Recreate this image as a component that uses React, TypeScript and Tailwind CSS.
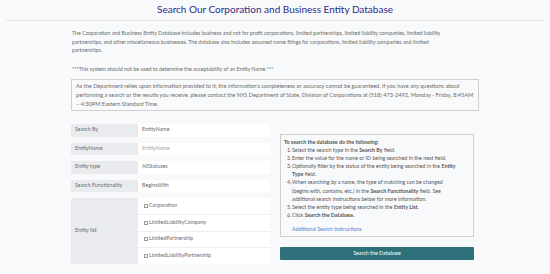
import React from "react";

const fields = [
  { label: "Search By", value: "EntityName", muted: false },
  { label: "EntityName", value: "EntityName", muted: true },
  { label: "Entity type", value: "AllStatuses", muted: false },
  { label: "Search Functionality", value: "BeginsWith", muted: false },
];

const entityTypes = [
  "Corporation",
  "LimitedLiabilityCompany",
  "LimitedPartnership",
  "LimitedLiabilityPartnership",
];

export default function App() {
  return (
    <div className="min-h-[274px] bg-[#f8f9fa] font-['Lato','Liberation_Sans',sans-serif] text-[#6b6b6b]">
      {/* Header */}
      <h1 className="pt-[3px] text-center text-[10px] leading-[13px] text-[#2b2a86]">
        Search Our Corporation and Business Entity Database
      </h1>
      <div className="mx-[6px] mt-[4px] border-t border-[#e3e4e8]" />

      <div className="ml-[71px] w-[408px]">
        {/* Intro */}
        <div className="w-[372px] pl-[1px] pt-[8px] text-[5.3px] leading-[8.5px]">
          <p>
            The Corporation and Business Entity Database includes business and not for profit corporations, limited
            partnerships, limited liability companies, limited liability partnerships, and other miscellaneous
            businesses. The database also includes assumed name filings for corporations, limited liability companies
            and limited partnerships.
          </p>
          <p className="mt-[10px]">***This system should not be used to determine the acceptability of an Entity Name.***</p>
        </div>

        <div className="mt-[6px] border border-[#cfcfd2] pb-[2px] pl-[4px] pr-[2px] pt-[1px] text-[5.6px] leading-[9px]">
          As the Department relies upon information provided to it, the information's completeness or accuracy cannot
          be guaranteed. If you have any questions about performing a search or the results you receive, please contact
          the NYS Department of State, Division of Corporations at (518) 473-2492, Monday - Friday, 8:45AM – 4:30PM
          Eastern Standard Time.
        </div>

        {/* Form */}
        <div className="mt-[13px] flex gap-[10px]">
          <div className="flex w-[199px] flex-col gap-[6px]">
            {fields.map((f) => (
              <div key={f.label} className="flex h-[12.5px] overflow-hidden rounded-[1px] bg-white text-[5.3px]">
                <div className="flex w-[67px] items-center bg-[#e9ebef] pl-[4px]">{f.label}</div>
                <div className={`flex flex-1 items-center pl-[4px] ${f.muted ? "text-[#a6a6a6]" : ""}`}>{f.value}</div>
              </div>
            ))}
            <div className="flex h-[66px] overflow-hidden rounded-[1px] bg-white text-[5.3px]">
              <div className="flex w-[67px] items-center bg-[#e9ebef] pl-[4px]">Entity list</div>
              <div className="flex flex-1 flex-col divide-y divide-[#eceef1]">
                {entityTypes.map((t) => (
                  <label key={t} className="flex flex-1 items-center gap-[1px] pl-[6px]">
                    <span className="inline-block h-[4px] w-[4px] rounded-[0.5px] border-[0.5px] border-[#9a9a9a] bg-white" />
                    {t}
                  </label>
                ))}
              </div>
            </div>
          </div>

          <div className="w-[194px] pt-[10px]">
            <div className="h-[103px] border border-[#cfcfd2] pl-[3px] pr-[14px] pt-[3px] text-[5.3px] leading-[8.1px] text-[#555]">
              <p className="font-bold">To search the database do the following:</p>
              <ol className="pl-[3px]">
                <li className="flex">
                  <span className="w-[5px] shrink-0">1.</span>
                  <span>
                    Select the search type in the <b>Search By</b> field.
                  </span>
                </li>
                <li className="flex">
                  <span className="w-[5px] shrink-0">2.</span>
                  <span>Enter the value for the name or ID being searched in the next field.</span>
                </li>
                <li className="flex">
                  <span className="w-[5px] shrink-0">3.</span>
                  <span>
                    Optionally filter by the status of the entity being searched in the <b>Entity Type</b> field.
                  </span>
                </li>
                <li className="flex">
                  <span className="w-[5px] shrink-0">4.</span>
                  <span>
                    When searching by a name, the type of matching can be changed (begins with, contains, etc.) in the{" "}
                    <b>Search Functionality</b> field. See additional search instructions below for more information.
                  </span>
                </li>
                <li className="flex">
                  <span className="w-[5px] shrink-0">5.</span>
                  <span>
                    Select the entity type being searched in the <b>Entity List.</b>
                  </span>
                </li>
                <li className="flex">
                  <span className="w-[5px] shrink-0">6.</span>
                  <span>
                    Click <b>Search the Database.</b>
                  </span>
                </li>
              </ol>
              <a className="mt-[6px] block pl-[8px] text-[#4f82d4]">Additional Search Instructions</a>
            </div>
            <button className="mt-[9px] h-[13px] w-full rounded-[1px] bg-[#2f717b] text-[5.3px] text-white">
              Search the Database
            </button>
          </div>
        </div>
      </div>
    </div>
  );
}
